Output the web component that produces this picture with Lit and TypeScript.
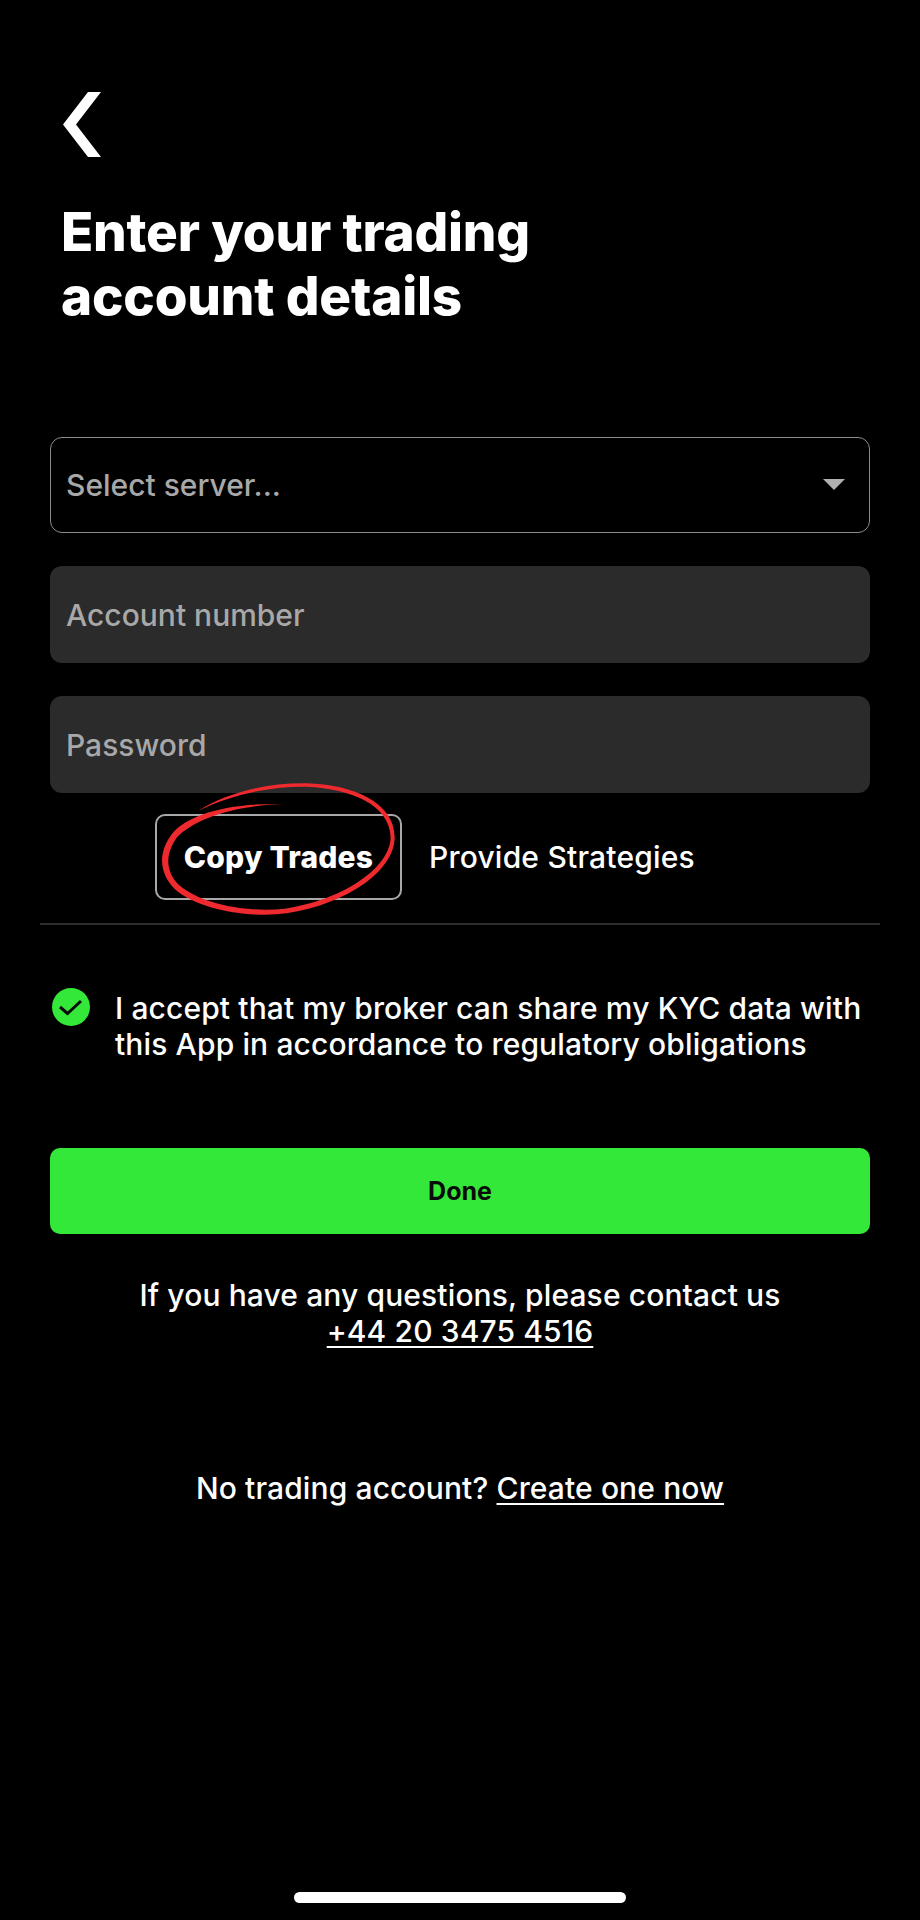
import { LitElement, html, css } from "lit";
import { customElement } from "lit/decorators.js";

@customElement("app-root")
export class AppRoot extends LitElement {
  static styles = css`
    :host {
      display: block;
      width: 920px;
      height: 1920px;
      background: #000;
      color: #fff;
      font-family: Inter, "Liberation Sans", sans-serif;
      overflow: hidden;
      position: relative;
    }
    .page { display: flex; flex-direction: column; padding: 92px 50px 0; }
    .back { display: block; width: 38px; height: 65px; margin-left: 13px; }
    h1 {
      margin: 43px 0 0 11px;
      font-size: 53px;
      line-height: 64px;
      font-weight: 800;
      letter-spacing: -0.2px;
    }
    .fields { display: flex; flex-direction: column; gap: 33px; margin-top: 109px; }
    .field {
      box-sizing: border-box;
      height: 97px;
      border-radius: 12px;
      background: #2b2b2b;
      display: flex;
      align-items: center;
      justify-content: space-between;
      padding: 0 24px 0 16px;
      font-size: 30px;
      font-weight: 500;
      color: #a8a8a8;
    }
    .field.select { height: 96px; background: #000; border: 1.5px solid #8c8c8c; padding-left: 15px; }
    .caret { width: 22px; height: 12px; display: block; }
    .tabs { display: flex; align-items: center; margin: 21px 0 0 105px; }
    .tab {
      box-sizing: border-box;
      height: 86px;
      display: flex;
      align-items: center;
      font-size: 30px;
      font-weight: 500;
      letter-spacing: 0.2px;
    }
    .tab.active {
      position: relative;
      width: 247px;
      justify-content: center;
      border: 2px solid #a8a8a8;
      border-radius: 10px;
      font-weight: 800;
    }
    .tab.other { margin-left: 27px; }
    .ring { position: absolute; left: -57px; top: -56px; width: 320px; height: 180px; }
    .rule { height: 2px; background: #2e2e2e; margin: 23px -10px 0; }
    .accept { display: flex; gap: 25px; margin-top: 63px; font-size: 30px; line-height: 36px; font-weight: 500; letter-spacing: 0.12px; }
    .accept-text { padding-top: 2px; }
    .check { width: 38px; height: 38px; flex: none; margin: 0 0 0 2px; display: block; }
    .done {
      margin-top: 86px;
      height: 86px;
      border-radius: 10px;
      background: #33e838;
      color: #0a0a0a;
      display: flex;
      align-items: center;
      justify-content: center;
      font-size: 25px;
      font-weight: 700;
    }
    .help { margin-top: 43px; text-align: center; font-size: 30px; line-height: 36px; font-weight: 500; letter-spacing: 0.12px; }
    .noacct { margin-top: 121px; text-align: center; font-size: 30px; line-height: 36px; font-weight: 500; letter-spacing: 0.12px; }
    u { text-underline-offset: 4px; text-decoration-thickness: 2px; }
    .home {
      position: absolute;
      left: 294px;
      top: 1892px;
      width: 332px;
      height: 11px;
      border-radius: 6px;
      background: #fff;
    }
  `;

  render() {
    return html`
      <div class="page">
        <svg class="back" viewBox="0 0 38 65">
          <polygon fill="#fff" points="25,0 38,0 13,32.5 38,65 25,65 0,32.5" />
        </svg>
        <h1>Enter your trading<br />account details</h1>
        <div class="fields">
          <div class="field select">
            <span>Select server...</span>
            <svg class="caret" viewBox="0 0 22 12"><polygon fill="#b0b0b0" points="0,0 22,0 11,11" /></svg>
          </div>
          <div class="field">Account number</div>
          <div class="field">Password</div>
        </div>
        <div class="tabs">
          <div class="tab active">
            Copy Trades
            <svg class="ring" viewBox="0 0 960 540">
              <path
                fill="#ee2a2e"
                d="M295 152 C380 98 500 68 620 70 C760 74 884 128 884 232 C884 332 742 432 560 460 C450 474 298 452 224 387 C178 340 173 280 214 224 C260 165 380 128 552 132 C400 137 285 175 230 233 C193 285 198 338 238 376 C308 436 450 458 555 446 C728 420 870 325 872 232 C870 135 755 86 620 80 C510 78 390 105 295 152 Z"
              />
            </svg>
          </div>
          <div class="tab other">Provide Strategies</div>
        </div>
        <div class="rule"></div>
        <div class="accept">
          <svg class="check" viewBox="0 0 38 38">
            <circle cx="19" cy="19" r="19" fill="#33e838" />
            <path d="M8 19 L15.500 25.500 L29 13" fill="none" stroke="#0a0a0a" stroke-width="3" />
          </svg>
          <div class="accept-text">I accept that my broker can share my KYC data with<br />this App in accordance to regulatory obligations</div>
        </div>
        <div class="done">Done</div>
        <div class="help">If you have any questions, please contact us<br /><u>+44 20 3475 4516</u></div>
        <div class="noacct">No trading account? <u>Create one now</u></div>
      </div>
      <div class="home"></div>
    `;
  }
}
